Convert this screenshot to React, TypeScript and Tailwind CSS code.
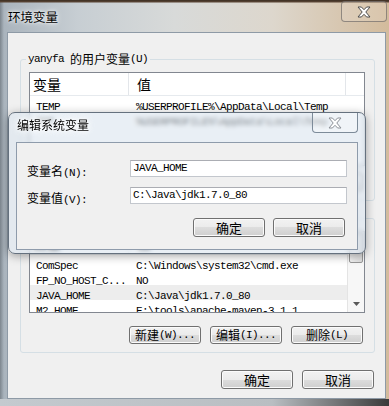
import React from 'react';

const CJK = "font-['Noto_Sans_CJK_SC',sans-serif]";

const Mono: React.FC<{ children: React.ReactNode }> = ({ children }) => (
  <span className="font-['Liberation_Mono',monospace] text-[11px] tracking-[-0.6px]">{children}</span>
);

const XGlyph: React.FC<{ stroke: string }> = ({ stroke }) => (
  <svg width="14" height="12" viewBox="0 0 14 12">
    <polygon
      points="1,1 4.4,1 7,3.7 9.6,1 13,1 8.8,6 13,11 9.6,11 7,8.3 4.4,11 1,11 5.2,6"
      fill="#fff"
      stroke={stroke}
      strokeWidth="1"
      strokeLinejoin="round"
    />
  </svg>
);

interface BtnProps {
  children: React.ReactNode;
  className?: string;
}

const WinButton: React.FC<BtnProps> = ({ children, className = '' }) => (
  <button
    type="button"
    className={`flex items-center justify-center rounded-[3px] border border-[#707070] bg-[linear-gradient(180deg,#f2f2f2_0%,#ebebeb_50%,#dddddd_50%,#cfcfcf_100%)] shadow-[inset_0_0_0_1px_#fbfbfb] text-black leading-none ${className}`}
  >
    {children}
  </button>
);

interface Row {
  name: string;
  value: string;
  selected?: boolean;
}

const userVars: Row[] = [
  { name: 'TEMP', value: '%USERPROFILE%\\AppData\\Local\\Temp' },
  { name: 'TMP', value: '%USERPROFILE%\\AppData\\Local\\Temp' },
];

const systemVars: Row[] = [
  { name: 'ComSpec', value: 'C:\\Windows\\system32\\cmd.exe' },
  { name: 'FP_NO_HOST_C...', value: 'NO' },
  { name: 'JAVA_HOME', value: 'C:\\Java\\jdk1.7.0_80', selected: true },
  { name: 'M2_HOME', value: 'E:\\tools\\apache-maven-3.1.1' },
];

const ListHeader: React.FC<{ filler: boolean }> = ({ filler }) => (
  <div className={`flex h-[23px] shrink-0 border-b border-[#e6eaee] bg-white text-[14px] leading-none text-black ${CJK}`}>
    <div className="flex w-[98px] items-center pl-[3px]">变量</div>
    <div className={`flex items-center border-l border-[#e3e6ea] pl-[8px] ${filler ? 'w-[218px] border-r' : 'flex-1'}`}>值</div>
    {filler && <div className="flex-1" />}
  </div>
);

const ListRows: React.FC<{ rows: Row[] }> = ({ rows }) => (
  <div className="flex-1 overflow-hidden bg-white">
    {rows.map((r) => (
      <div key={r.name} className={`flex h-[15px] items-center leading-none text-black ${r.selected ? 'bg-[#ededed]' : ''}`}>
        <div className="w-[98px] pl-[6px]">
          <Mono>{r.name}</Mono>
        </div>
        <div className="pl-[8px] whitespace-nowrap">
          <Mono>{r.value}</Mono>
        </div>
      </div>
    ))}
  </div>
);

const Label: React.FC<{ cn: string; key2: string }> = ({ cn, key2 }) => (
  <span className={`text-[12px] leading-none text-black ${CJK}`}>
    {cn}
    <Mono>{key2}</Mono>
  </span>
);

const Scrollbar: React.FC = () => (
  <div className="flex w-[17px] flex-col border-l border-[#e4e4e4] bg-[#f7f7f7]">
    <div className="mx-[1px] mt-[1px] h-[30px] rounded-[2px] border border-[#979797] bg-[linear-gradient(90deg,#f4f4f4,#dcdcdc)]" />
    <div className="flex-1" />
    <div className="flex h-[16px] items-center justify-center">
      <svg width="7" height="4" viewBox="0 0 7 4">
        <polygon points="0,0 7,0 3.5,4" fill="#5a5a5a" />
      </svg>
    </div>
  </div>
);

export default function App() {
  return (
    <div
      className={`relative h-[406px] w-[389px] overflow-hidden bg-[linear-gradient(180deg,#3b2e22_0px,#5b4636_2px,transparent_3px),linear-gradient(90deg,#7d868e_0px,#aab4bd_4px,#c7ced3_20%,#d8dad9_45%,#ddd7cd_70%,#d3bb9c_100%)] ${CJK}`}
    >
      {/* title bar */}
      <div className="flex h-[32px] items-start justify-between">
        <span className="ml-[8px] mt-[9px] text-[12.5px] leading-[16px] text-black [text-shadow:0_0_6px_#fff,0_0_3px_#fff]">
          环境变量
        </span>
        <div className="mr-[2px] mt-[1px] flex h-[21px] w-[46px] items-center justify-center rounded-[4px] border border-[#6f6a66]/70 bg-white/15">
          <XGlyph stroke="#4d4d4d" />
        </div>
      </div>

      {/* client area */}
      <div className="ml-[7px] flex h-[367px] w-[379px] flex-col border border-[#8e9aa6] bg-[#f0f0f0]">
        <fieldset className="ml-[12px] mt-[19px] w-[355px] rounded-[3px] border border-[#d5dfe5] pb-[9px]">
          <legend className="ml-[5px] flex h-[14px] items-center px-[2px] text-[12px] leading-none text-black">
            <Mono>yanyfa&nbsp;</Mono>的用户变量<Mono>(U)</Mono>
          </legend>
          <div className="ml-[8px] mt-[6px] flex h-[94px] w-[336px] flex-col border border-[#828790]">
            <ListHeader filler />
            <ListRows rows={userVars} />
          </div>
          <div className="mt-[7px] flex justify-end gap-[9px] pr-[11px]">
            <WinButton className="h-[18px] w-[72px] text-[12px]">
              新建<Mono>(N)...</Mono>
            </WinButton>
            <WinButton className="h-[18px] w-[72px] text-[12px]">
              编辑<Mono>(E)...</Mono>
            </WinButton>
            <WinButton className="h-[18px] w-[72px] text-[12px]">
              删除<Mono>(D)</Mono>
            </WinButton>
          </div>
        </fieldset>

        <fieldset className="ml-[12px] mt-[10px] w-[355px] rounded-[3px] border border-[#d5dfe5] pb-[8px]">
          <legend className="ml-[5px] flex h-[14px] items-center px-[2px] text-[12px] leading-none text-black">
            系统变量<Mono>(S)</Mono>
          </legend>
          <div className="ml-[8px] mt-[6px] flex h-[82px] w-[336px] border border-[#828790]">
            <div className="flex flex-1 flex-col">
              <ListHeader filler={false} />
              <ListRows rows={systemVars} />
            </div>
            <Scrollbar />
          </div>
          <div className="mt-[13px] flex justify-end gap-[9px] pr-[11px]">
            <WinButton className="h-[18px] w-[72px] text-[12px]">
              新建<Mono>(W)...</Mono>
            </WinButton>
            <WinButton className="h-[18px] w-[72px] text-[12px]">
              编辑<Mono>(I)...</Mono>
            </WinButton>
            <WinButton className="h-[18px] w-[72px] text-[12px]">
              删除<Mono>(L)</Mono>
            </WinButton>
          </div>
        </fieldset>

        <div className="mt-[17px] flex justify-end gap-[9px] pr-[11px]">
          <WinButton className="h-[19px] w-[72px] text-[13px]">确定</WinButton>
          <WinButton className="h-[19px] w-[72px] text-[13px]">取消</WinButton>
        </div>
      </div>

      {/* bottom frame */}
      <div className="h-[7px] bg-[linear-gradient(90deg,#c4cacf_0%,#b9bec2_70%,#3a3a3a_100%)]" />

      {/* edit system variable dialog */}
      <div className="absolute left-[8px] top-[112px] flex h-[142px] w-[358px] flex-col rounded-[7px] border border-[#65717e] bg-[#dbe5ee]/60 shadow-[0_2px_10px_rgba(0,0,0,0.35)] backdrop-blur-[2px]">
        <div className="flex h-[29px] shrink-0 items-start justify-between">
          <span className="ml-[8px] mt-[4px] text-[12px] leading-[16px] text-black [text-shadow:0_0_6px_#fff,0_0_3px_#fff,0_0_10px_#fff]">
            编辑系统变量
          </span>
          <div className="mr-[7px] flex h-[20px] w-[46px] items-center justify-center rounded-b-[4px] border border-t-0 border-[#7d8b99] bg-white/30">
            <XGlyph stroke="#8a8f96" />
          </div>
        </div>
        <div className="mx-[7px] h-[108px] shrink-0 border border-[#8e9bab] bg-[#f0f0f0]">
          <div className="mt-[17px] flex h-[17px] items-center">
            <div className="w-[113px] pl-[10px]">
              <Label cn="变量名" key2="(N):" />
            </div>
            <div className="flex h-[17px] w-[217px] items-center border border-[#c3c7cd] border-t-[#abadb3] bg-white pl-[2px]">
              <Mono>JAVA_HOME</Mono>
            </div>
          </div>
          <div className="mt-[10px] flex h-[17px] items-center">
            <div className="w-[113px] pl-[10px]">
              <Label cn="变量值" key2="(V):" />
            </div>
            <div className="flex h-[17px] w-[217px] items-center border border-[#c3c7cd] border-t-[#abadb3] bg-white pl-[2px]">
              <Mono>C:\Java\jdk1.7.0_80</Mono>
            </div>
          </div>
          <div className="mt-[14px] flex justify-end gap-[8px] pr-[12px]">
            <WinButton className="h-[19px] w-[72px] text-[13px]">确定</WinButton>
            <WinButton className="h-[19px] w-[72px] text-[13px]">取消</WinButton>
          </div>
        </div>
      </div>
    </div>
  );
}
